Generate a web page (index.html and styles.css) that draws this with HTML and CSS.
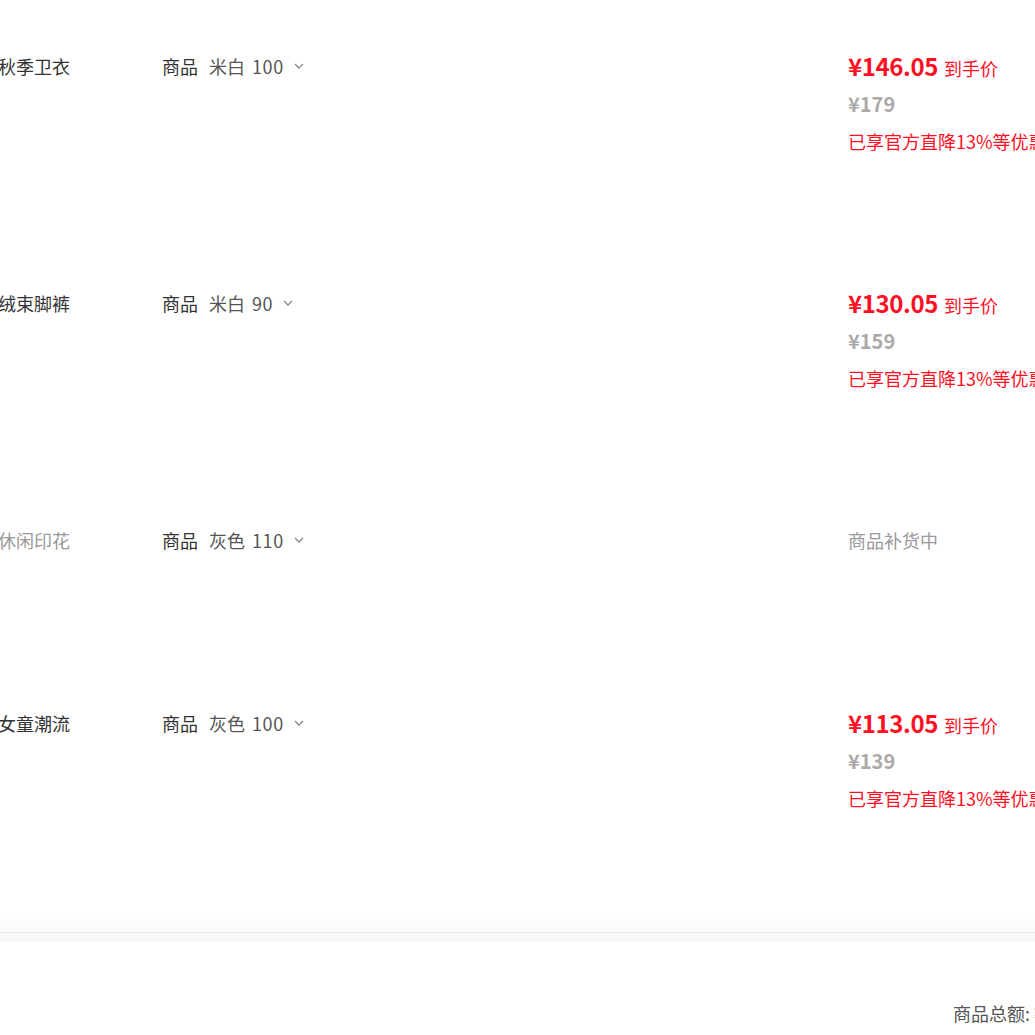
FILE: index.html
```html
<!DOCTYPE html>
<html lang="zh-CN">
<head>
    <meta charset="UTF-8">
    <meta name="viewport" content="width=device-width, initial-scale=1.0">
    <title>购物车</title>
    <link rel="stylesheet" href="styles.css">
</head>
<body>
    <div class="page">
        <div class="cart-list">
            <div class="item">
                <div class="title"><span>儿童加绒秋季卫衣</span></div>
                <div class="spec">
                    <span class="spec-label">商品</span>
                    <span class="spec-value">米白</span><span class="spec-size">100</span>
                    <svg class="chevron" viewBox="0 0 10 6" width="10" height="6"><path d="M1 1l4 4 4-4" fill="none" stroke="currentColor" stroke-width="1.3"/></svg>
                </div>
                <div class="price">
                    <div class="price-main"><span class="final">¥146.05</span><span class="final-label">到手价</span></div>
                    <div class="price-orig">¥179</div>
                    <div class="price-note">已享官方直降13%等优惠</div>
                </div>
            </div>

            <div class="item">
                <div class="title"><span>儿童加绒束脚裤</span></div>
                <div class="spec">
                    <span class="spec-label">商品</span>
                    <span class="spec-value">米白</span><span class="spec-size">90</span>
                    <svg class="chevron" viewBox="0 0 10 6" width="10" height="6"><path d="M1 1l4 4 4-4" fill="none" stroke="currentColor" stroke-width="1.3"/></svg>
                </div>
                <div class="price">
                    <div class="price-main"><span class="final">¥130.05</span><span class="final-label">到手价</span></div>
                    <div class="price-orig">¥159</div>
                    <div class="price-note">已享官方直降13%等优惠</div>
                </div>
            </div>

            <div class="item soldout">
                <div class="title"><span>男童休闲印花</span></div>
                <div class="spec">
                    <span class="spec-label">商品</span>
                    <span class="spec-value">灰色</span><span class="spec-size">110</span>
                    <svg class="chevron" viewBox="0 0 10 6" width="10" height="6"><path d="M1 1l4 4 4-4" fill="none" stroke="currentColor" stroke-width="1.3"/></svg>
                </div>
                <div class="price">
                    <div class="restock">商品补货中</div>
                </div>
            </div>

            <div class="item">
                <div class="title"><span>男童女童潮流</span></div>
                <div class="spec">
                    <span class="spec-label">商品</span>
                    <span class="spec-value">灰色</span><span class="spec-size">100</span>
                    <svg class="chevron" viewBox="0 0 10 6" width="10" height="6"><path d="M1 1l4 4 4-4" fill="none" stroke="currentColor" stroke-width="1.3"/></svg>
                </div>
                <div class="price">
                    <div class="price-main"><span class="final">¥113.05</span><span class="final-label">到手价</span></div>
                    <div class="price-orig">¥139</div>
                    <div class="price-note">已享官方直降13%等优惠</div>
                </div>
            </div>
        </div>

        <div class="divider"></div>

        <div class="summary-row">
            <div class="summary">商品总额: ¥389.15</div>
        </div>
    </div>
</body>
</html>
```

FILE: styles.css
```css
* {
    margin: 0;
    padding: 0;
    box-sizing: border-box;
}

body {
    font-family: "Noto Sans CJK SC", "Noto Sans", sans-serif;
    background: #fff;
    color: #333;
    overflow: hidden;
}

.page {
    width: 1035px;
    height: 1035px;
    overflow: hidden;
}

.item {
    display: grid;
    grid-template-columns: 70px 1fr 187px;
    column-gap: 92px;
    height: 237px;
    padding-top: 51px;
    font-size: 18px;
}

.item.soldout {
    height: 183px;
}

.title {
    display: flex;
    justify-content: flex-end;
    overflow: hidden;
    height: 30px;
    line-height: 30px;
    white-space: nowrap;
    color: #333;
}

.soldout .title {
    color: #999;
}

.spec {
    display: flex;
    align-items: center;
    height: 30px;
    white-space: nowrap;
}

.spec-label {
    color: #333;
    margin-right: 11px;
}

.spec-value {
    color: #555;
}

.spec-size {
    color: #555;
    margin-left: 7px;
    letter-spacing: 0.6px;
}

.chevron {
    color: #888;
    margin-left: 10px;
}

.price {
    white-space: nowrap;
}

.price-main {
    display: flex;
    align-items: baseline;
    height: 30px;
    line-height: 30px;
}

.final {
    color: #ff0f23;
    font-size: 24px;
    font-weight: bold;
    letter-spacing: -0.4px;
}

.final-label {
    color: #ff0f23;
    font-size: 18px;
    margin-left: 6px;
}

.price-orig {
    color: #aaa;
    font-size: 20px;
    font-weight: bold;
    height: 38px;
    line-height: 46px;
}

.price-note {
    color: #ff0f23;
    font-size: 18px;
    line-height: 36px;
    margin-top: 4px;
}

.restock {
    color: #999;
    height: 30px;
    line-height: 30px;
}

.divider {
    margin-top: 25px;
    height: 23px;
    background: linear-gradient(#fcfcfc 0, #fafafa 13px, #e8e8e8 13px, #e8e8e8 14px, #f8f8f8 14px);
}

.summary-row {
    padding-top: 59px;
    padding-left: 953px;
    white-space: nowrap;
}

.summary {
    font-size: 18px;
    color: #555;
    line-height: 24px;
}
```
